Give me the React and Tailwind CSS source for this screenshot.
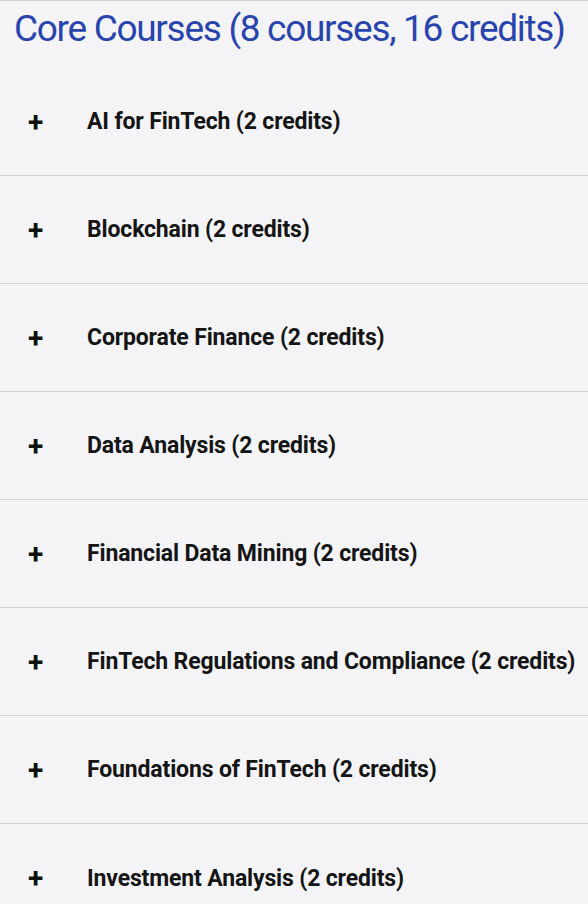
const COURSES = [
  'AI for FinTech (2 credits)',
  'Blockchain (2 credits)',
  'Corporate Finance (2 credits)',
  'Data Analysis (2 credits)',
  'Financial Data Mining (2 credits)',
  'FinTech Regulations and Compliance (2 credits)',
  'Foundations of FinTech (2 credits)',
  'Investment Analysis (2 credits)',
];

export default function App() {
  return (
    <div className="h-[904px] w-[588px] overflow-hidden border-t border-[#cfcfd2] bg-[#f4f4f6] font-['Roboto',sans-serif]">
      <h2 className="h-[67px] pl-[14px] pt-[6px] text-[37px] leading-[44px] tracking-[-1.3px] text-[#2a44ad] whitespace-nowrap">
        Core Courses (8 courses, 16 credits)
      </h2>
      <div>
        {COURSES.map((c, i) => (
          <div
            key={c}
            className={`flex h-[108px] items-center pt-[2px] ${i < COURSES.length - 1 ? 'border-b border-[#d3d3d6]' : ''}`}
          >
            <span className="w-[87px] pl-[28px] text-[28px] font-bold leading-none text-[#111]">+</span>
            <span className="whitespace-nowrap text-[23px] font-bold tracking-[-0.15px] text-[#151515]">{c}</span>
          </div>
        ))}
      </div>
    </div>
  );
}
